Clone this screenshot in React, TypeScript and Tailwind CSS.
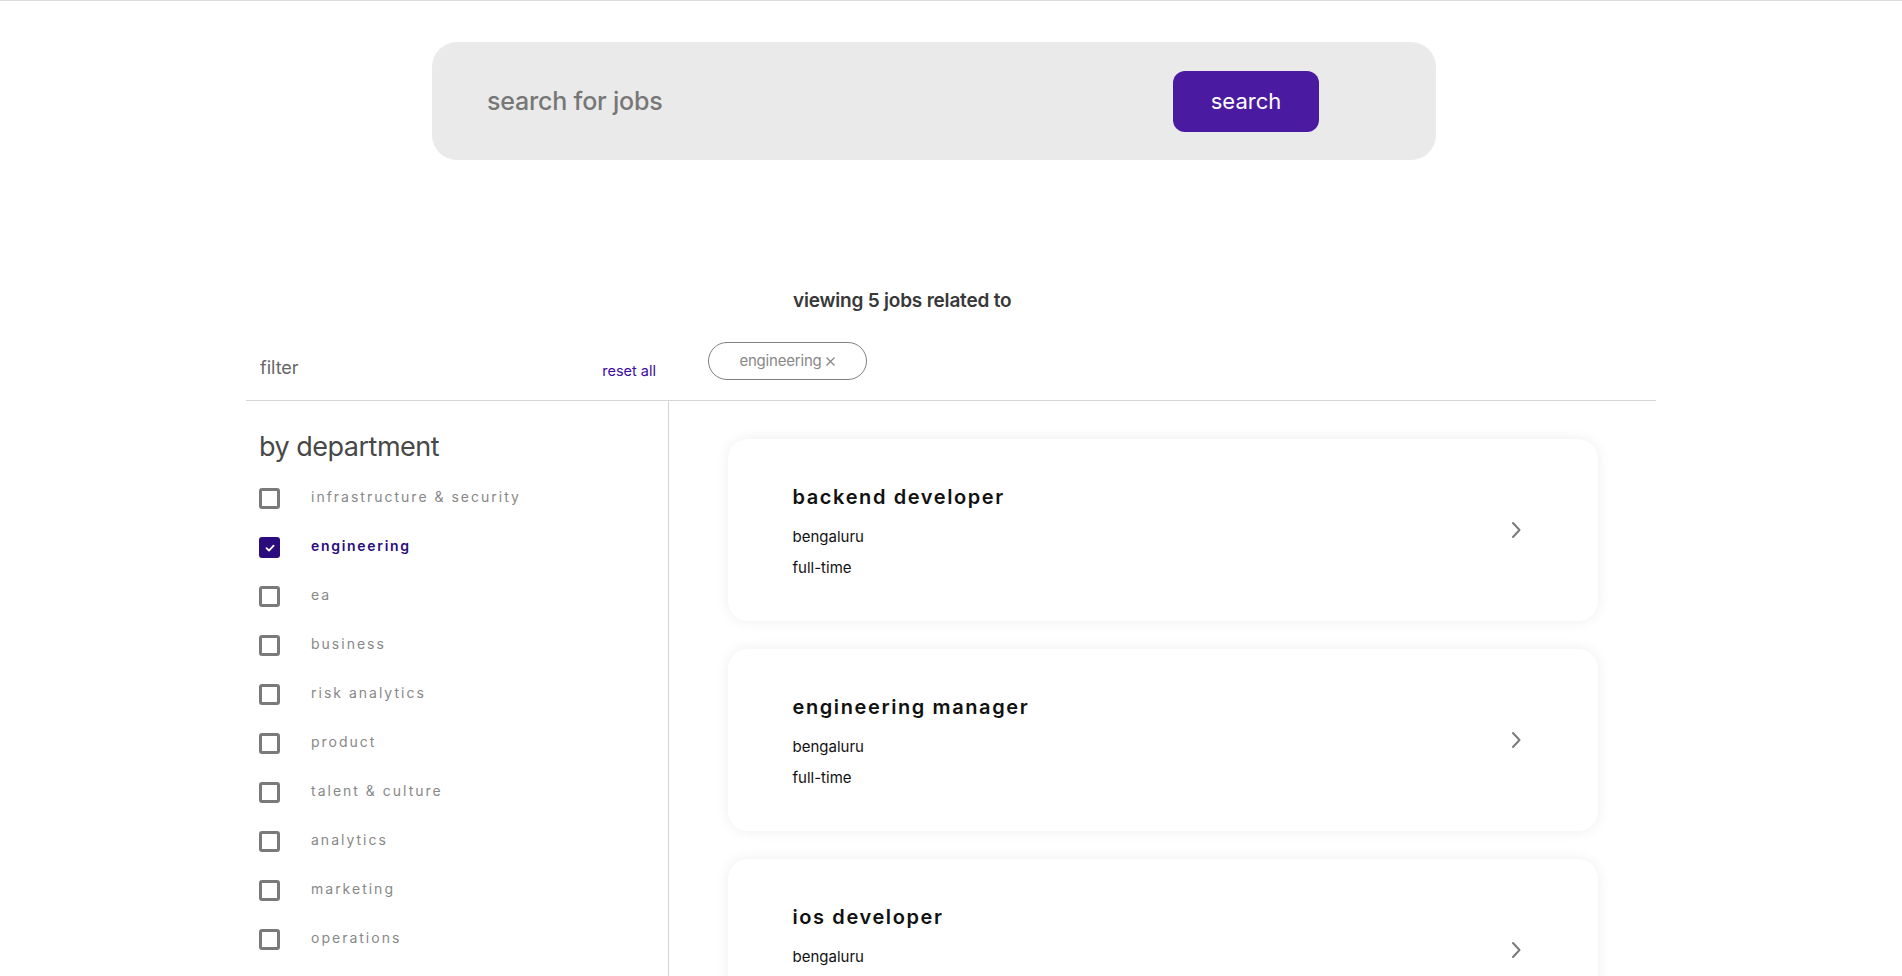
import React from "react";

const departments = [
  { name: "infrastructure & security", checked: false },
  { name: "engineering", checked: true },
  { name: "ea", checked: false },
  { name: "business", checked: false },
  { name: "risk analytics", checked: false },
  { name: "product", checked: false },
  { name: "talent & culture", checked: false },
  { name: "analytics", checked: false },
  { name: "marketing", checked: false },
  { name: "operations", checked: false },
];

const jobs = [
  { title: "backend developer", location: "bengaluru", type: "full-time" },
  { title: "engineering manager", location: "bengaluru", type: "full-time" },
  { title: "ios developer", location: "bengaluru", type: "full-time" },
  { title: "android developer", location: "bengaluru", type: "full-time" },
  { title: "frontend developer", location: "bengaluru", type: "full-time" },
];

function Checkbox({ checked }: { checked: boolean }) {
  if (checked) {
    return (
      <div className="flex h-[21px] w-[21px] shrink-0 items-center justify-center rounded-[3px] bg-[#2a0c7e]">
        <svg width="12" height="12" viewBox="0 0 12 12" fill="none">
          <path d="M2.5 6.2 L5 8.6 L9.6 3.6" stroke="white" strokeWidth="1.8" strokeLinecap="round" strokeLinejoin="round" />
        </svg>
      </div>
    );
  }
  return <div className="h-[21px] w-[21px] shrink-0 rounded-[3px] border-[3px] border-[#7a7a7a] bg-white" />;
}

export default function App() {
  return (
    <div className="h-[976px] overflow-hidden bg-white font-['Inter',sans-serif]">
      <div className="h-px w-full bg-[#dcdcdc]" />
      <div className="ml-[432px] mt-[41px] flex h-[118px] w-[1004px] items-center justify-between rounded-[25px] bg-[#eaeaea] pl-[55px] pr-[117px]">
        <span className="text-[25px] font-medium leading-none tracking-[-0.2px] text-[#777777]">search for jobs</span>
        <button className="flex h-[61px] w-[146px] items-center justify-center rounded-[12px] bg-[#4a1ba0] text-[22px] text-white">
          search
        </button>
      </div>

      <div className="mx-auto w-[1410px]">
        <div className="mt-[127px] pl-[547px] text-[19px] font-semibold leading-[28px] tracking-[-0.2px] text-[#383838]">
          viewing 5 jobs related to
        </div>

        <div className="mt-[24px] flex h-[62px] items-start border-b border-[#d4d4d4]">
          <div className="flex w-[423px] items-start justify-between pl-[14px] pr-[13px]">
            <span className="mt-[17px] text-[18px] leading-[24px] text-[#666666]">filter</span>
            <span className="mt-[22px] text-[14.5px] leading-[20px] text-[#3d0ca0]">reset all</span>
          </div>
          <div className="ml-[39px] mt-[3px] flex h-[38px] w-[159px] items-center justify-center gap-[3px] rounded-full border border-[#808080] text-[15px] tracking-[-0.2px] text-[#888888]">
            <span>engineering</span>
            <svg width="11" height="11" viewBox="0 0 11 11" fill="none">
              <path d="M1.5 1.5 L9.5 9.5 M9.5 1.5 L1.5 9.5" stroke="#888888" strokeWidth="1.3" />
            </svg>
          </div>
        </div>

        <div className="flex">
          <div className="w-[423px] shrink-0 border-r border-[#d4d4d4] pb-[200px] pl-[13px] pt-[30px]">
            <h2 className="text-[27px] leading-[32px] tracking-[-0.5px] text-[#484848]">by department</h2>
            <div className="mt-[11px] flex flex-col">
              {departments.map((d) => (
                <div key={d.name} className="flex h-[49px] items-center gap-[31px]">
                  <Checkbox checked={d.checked} />
                  <span
                    className={
                      d.checked
                        ? "mb-[4px] text-[14px] font-semibold tracking-[1.7px] text-[#2a0c7e]"
                        : "mb-[4px] text-[14px] tracking-[2px] text-[#888888]"
                    }
                  >
                    {d.name}
                  </span>
                </div>
              ))}
            </div>
          </div>

          <div className="flex flex-1 flex-col items-center gap-[28px] pt-[38px]">
            {jobs.map((j) => (
              <div
                key={j.title}
                className="flex h-[182px] w-[870px] shrink-0 items-center justify-between rounded-[20px] bg-white pl-[65px] pr-[76px] shadow-[0_0_14px_rgba(0,0,0,0.07)]"
              >
                <div className="flex flex-col self-start pt-[44px]">
                  <span className="text-[20px] font-semibold leading-[28px] tracking-[1.6px] text-[#111111]">{j.title}</span>
                  <span className="mt-[10px] text-[15px] leading-[31px] text-[#111111]">{j.location}</span>
                  <span className="text-[15px] leading-[31px] text-[#111111]">{j.type}</span>
                </div>
                <svg width="12" height="18" viewBox="0 0 12 18" fill="none">
                  <path d="M3 2 L9.5 9 L3 16" stroke="#7a7a7a" strokeWidth="2" strokeLinecap="round" strokeLinejoin="round" />
                </svg>
              </div>
            ))}
          </div>
        </div>
      </div>
    </div>
  );
}
